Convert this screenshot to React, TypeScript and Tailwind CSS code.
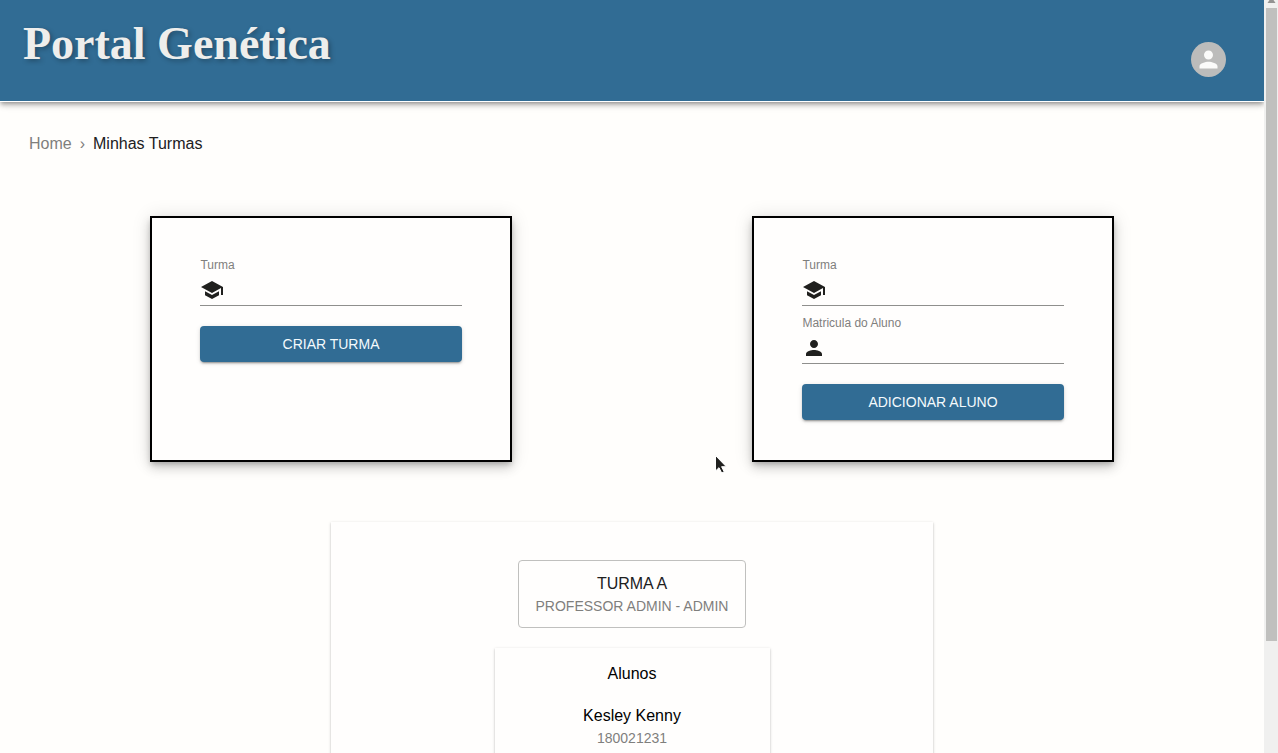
import { useId } from "react";
import type { ReactNode } from "react";
import { MdPerson, MdSchool } from "react-icons/md";

function Field({ label, icon }: { label: string; icon: ReactNode }) {
  const id = useId();
  return (
    <div className="flex flex-col">
      <label htmlFor={id} className="text-xs leading-4 text-[#7f7f7d]">
        {label}
      </label>
      <div className="flex h-[33px] items-center border-b border-[#8f8f8d] pt-[2px] text-[#20201e]">
        {icon}
        <input id={id} className="ml-2 min-w-0 flex-1 bg-transparent text-base outline-none" />
      </div>
    </div>
  );
}

function FormCard({ action, children }: { action: string; children: ReactNode }) {
  return (
    <form
      onSubmit={(e) => e.preventDefault()}
      className="flex w-3/5 flex-col border-2 border-black bg-[#fffefd] px-12 pt-[39px] pb-10 shadow-[0_3px_5px_-1px_rgba(0,0,0,0.2),0_6px_10px_rgba(0,0,0,0.14),0_1px_18px_rgba(0,0,0,0.12)]"
    >
      <div className="flex flex-col gap-[9px]">{children}</div>
      <button
        type="submit"
        className="mt-5 h-9 rounded bg-[#316c94] text-sm text-[#f4fafd] shadow-[0_3px_1px_-2px_rgba(0,0,0,0.2),0_2px_2px_rgba(0,0,0,0.14),0_1px_5px_rgba(0,0,0,0.12)]"
      >
        {action}
      </button>
    </form>
  );
}

const paper =
  "bg-[#fffefd] shadow-[0_2px_1px_-1px_rgba(0,0,0,0.2),0_1px_1px_rgba(0,0,0,0.14),0_1px_3px_rgba(0,0,0,0.2)]";

const students = [
  { name: "Kesley Kenny", id: "180021231" },
];

export default function App() {
  return (
    <div className="relative flex h-screen overflow-hidden bg-[#fffefc] font-['Liberation_Sans',Arial,sans-serif] text-base text-[#20201e]">
      <div className="flex min-w-0 flex-1 flex-col overflow-hidden">
        <header className="flex shrink-0 items-start justify-between border-b border-white bg-[#316c94] pt-[18px] pr-[38px] pb-6 pl-[23px] shadow-[0_2px_4px_-1px_rgba(0,0,0,0.3),0_4px_5px_rgba(0,0,0,0.14),0_1px_10px_rgba(0,0,0,0.12)]">
          <h1 className="font-['Liberation_Serif','Times_New_Roman',serif] text-[46px] leading-[52px] font-bold text-[#eeeeec] [text-shadow:2px_2px_5px_rgba(0,0,0,0.3)]">
            Portal Genética
          </h1>
          <button
            type="button"
            aria-label="Conta"
            className="mt-6 flex size-[35px] items-center justify-center rounded-full bg-[#bcbcbb] text-[#fbfbfa]"
          >
            <MdPerson size={27} />
          </button>
        </header>

        <main className="flex flex-col px-[30px]">
          <nav aria-label="breadcrumb" className="-ml-px pt-[30px]">
            <ol className="flex leading-6">
              <li>
                <a href="#home" className="text-[#7f7f7d]">Home</a>
              </li>
              <li aria-hidden="true" className="mx-2 text-[#7f7f7d]">›</li>
              <li>
                <a href="#turmas" aria-current="page">Minhas Turmas</a>
              </li>
            </ol>
          </nav>

          <div className="mt-[60px] grid grid-cols-2">
            <div className="flex justify-center">
              <FormCard action="CRIAR TURMA">
                <Field label="Turma" icon={<MdSchool size={24} />} />
              </FormCard>
            </div>
            <div className="flex justify-center">
              <FormCard action="ADICIONAR ALUNO">
                <Field label="Turma" icon={<MdSchool size={24} />} />
                <Field label="Matricula do Aluno" icon={<MdPerson size={24} />} />
              </FormCard>
            </div>
          </div>

          <section className={`mt-[60px] flex w-1/2 flex-col items-center self-center pt-[38px] pb-10 ${paper}`}>
            <button
              type="button"
              className="rounded border border-[#c0c0be] px-[17px] pt-[11px] pb-[10px] text-center"
            >
              <span className="block leading-6">TURMA A</span>
              <span className="block text-sm leading-[21px] text-[#7f7f7d]">PROFESSOR ADMIN - ADMIN</span>
            </button>
            <div className={`mt-5 w-[275px] pt-[14px] pb-4 text-center text-black ${paper}`}>
              <h2 className="leading-6">Alunos</h2>
              <ul className="mt-[18px] flex flex-col gap-4">
                {students.map((s) => (
                  <li key={s.id}>
                    <p className="leading-6">{s.name}</p>
                    <p className="text-sm leading-[21px] text-[#7f7f7d]">{s.id}</p>
                  </li>
                ))}
              </ul>
            </div>
          </section>
        </main>
      </div>

      <div aria-hidden="true" className="flex w-[14px] shrink-0 flex-col items-center bg-[#f0f0ef]">
        <svg width="14" height="8" viewBox="0 0 14 8">
          <path d="M5.500 0h4l2 3h-8z" fill="#939392" />
        </svg>
        <div className="h-[84%] w-[11px] bg-[#c0c0be]" />
      </div>

      <svg
        aria-hidden="true"
        className="absolute top-[453px] left-[713px]"
        width="16"
        height="24"
        viewBox="0 0 16 24"
      >
        <path
          d="M2.500 2.500v15.500l3.500-3.300 2.700 5.300 2.500-1.200-2.600-5.100h4.700z"
          fill="#20201e"
          stroke="#fff"
          strokeWidth="1"
        />
      </svg>
    </div>
  );
}
